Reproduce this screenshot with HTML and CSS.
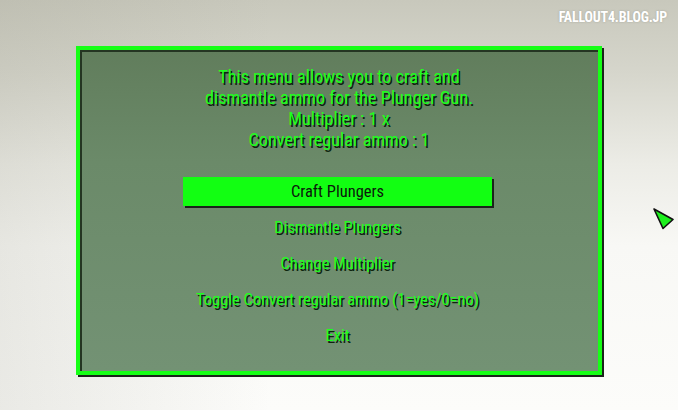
FILE: index.html
```html
<!DOCTYPE html>
<html>
<head>
<meta charset="utf-8">
<link rel="stylesheet" href="styles.css">
</head>
<body>
<div class="screen">
  <div class="watermark">FALLOUT4.BLOG.JP</div>
  <div class="panel">
    <div class="panel-inner">
      <div class="intro">
        <p>This menu allows you to craft and</p>
        <p>dismantle ammo for the Plunger Gun.</p>
        <p>Multiplier : 1 x</p>
        <p>Convert regular ammo : 1</p>
      </div>
      <ul class="menu">
        <li class="item"><span class="btn selected">Craft Plungers</span></li>
        <li class="item"><span class="btn">Dismantle Plungers</span></li>
        <li class="item"><span class="btn">Change Multiplier</span></li>
        <li class="item"><span class="btn">Toggle Convert regular ammo (1=yes/0=no)</span></li>
        <li class="item"><span class="btn">Exit</span></li>
      </ul>
    </div>
  </div>
  <svg class="cursor" width="24" height="24" viewBox="0 0 24 24">
    <polygon points="2,2 21,12.5 11,21.5" fill="#1ef01e" stroke="#111" stroke-width="1.6" stroke-linejoin="round"/>
  </svg>
</div>
</body>
</html>
```
FILE: styles.css
```css
html, body {
  margin: 0;
  padding: 0;
}
body {
  width: 678px;
  height: 410px;
  overflow: hidden;
  font-family: "Roboto Condensed", "Liberation Sans Narrow", "DejaVu Sans Condensed", Roboto, sans-serif;
}
.screen {
  position: relative;
  width: 678px;
  height: 410px;
  box-sizing: border-box;
  padding: 46px 0 0 76px;
  background:
    linear-gradient(90deg, rgba(150,150,135,0.18) 0%, rgba(150,150,135,0) 40%),
    linear-gradient(180deg, #c8c8bc 0%, #d6d6cc 18%, #ecece6 40%, #f8f8f5 60%, #fcfcfa 100%);
}
.watermark {
  position: absolute;
  top: 9px;
  right: 11px;
  color: #ffffff;
  font-weight: 700;
  font-size: 14px;
  letter-spacing: -0.2px;
  text-shadow: 0 0 2px rgba(120,120,110,0.5);
}
.panel {
  width: 526px;
  height: 329px;
  box-sizing: border-box;
  border: 4px solid #16ff16;
  box-shadow: 2px 2px 0 #1b231b;
  background: linear-gradient(180deg, #617d5c 0%, #6b8a69 35%, #739274 100%);
}
.panel-inner {
  height: 100%;
  box-shadow: inset 2px 2px 0 #243522;
  box-sizing: border-box;
  padding-top: 16px;
  display: flex;
  flex-direction: column;
  align-items: center;
}
.intro p {
  margin: 0;
  text-align: center;
  font-size: 18.2px;
  line-height: 21px;
  color: #1cff1c;
  text-shadow: 1.5px 1.5px 0.5px #0d220d;
}
.menu {
  list-style: none;
  margin: 23px 0 0 0;
  padding: 0;
  width: 100%;
  display: flex;
  flex-direction: column;
  align-items: center;
}
.item {
  height: 36px;
  display: flex;
  align-items: center;
  justify-content: center;
  width: 100%;
  margin-left: -3px;
}
.btn {
  font-size: 16.5px;
  color: #1cff1c;
  text-shadow: 1.5px 1.5px 0.5px #0d220d;
}
.btn.selected {
  width: 309px;
  height: 29px;
  display: flex;
  align-items: center;
  justify-content: center;
  background: #12ff12;
  color: #0c170c;
  text-shadow: none;
  box-shadow: 2px 2px 0 #1b231b;
}
.cursor {
  position: absolute;
  left: 652px;
  top: 207px;
}
```
